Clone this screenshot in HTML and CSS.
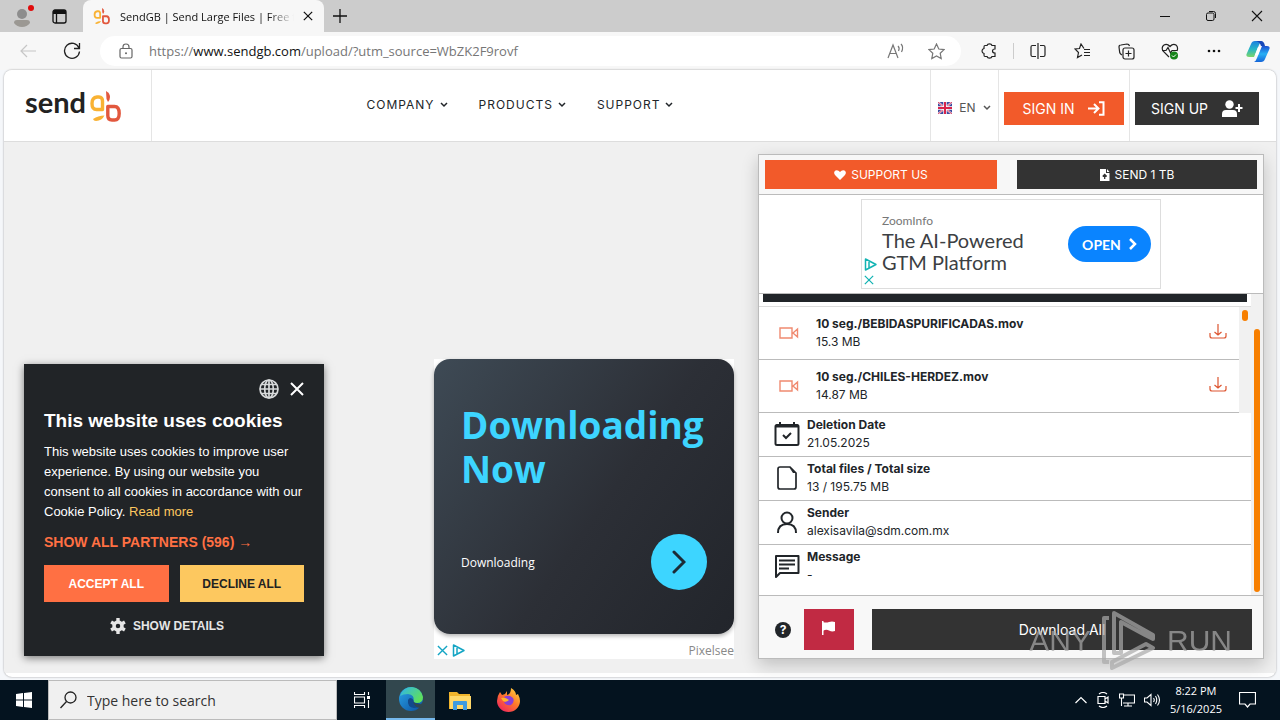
FILE: index.html
```
<!DOCTYPE html>
<html lang="en">
<head>
    <meta charset="UTF-8">
    <meta name="viewport" content="width=device-width, initial-scale=1.0">
    <title>SendGB | Send Large Files | Free</title>
    <link rel="stylesheet" href="styles.css">
</head>
<body>
    <svg class="defs" width="0" height="0" aria-hidden="true">
        <defs>
            <linearGradient id="copilotLeft" x1="0" y1="0" x2="0" y2="1">
                <stop offset="0" stop-color="#1b7fe0"/><stop offset="0.5" stop-color="#25b5c8"/><stop offset="1" stop-color="#7bd66a"/>
            </linearGradient>
            <linearGradient id="copilotRight" x1="0" y1="0" x2="0" y2="1">
                <stop offset="0" stop-color="#1a4fd0"/><stop offset="0.5" stop-color="#28b0f5"/><stop offset="1" stop-color="#1565d8"/>
            </linearGradient>
            <linearGradient id="edgeBlue" x1="0" y1="0" x2="1" y2="1">
                <stop offset="0" stop-color="#2aa5e8"/><stop offset="1" stop-color="#0c4fa0"/>
            </linearGradient>
            <linearGradient id="edgeGreen" x1="0" y1="0" x2="1" y2="0.6">
                <stop offset="0" stop-color="#2fb4ee"/><stop offset="1" stop-color="#5fe05a"/>
            </linearGradient>
            <linearGradient id="foxFire" x1="1" y1="0" x2="0.2" y2="1">
                <stop offset="0" stop-color="#ffe23f"/><stop offset="0.5" stop-color="#ff7a2a"/><stop offset="1" stop-color="#f0245e"/>
            </linearGradient>
            <symbol id="gb" viewBox="0 0 32 34">
                <g fill="none" stroke-width="3.400" stroke-linejoin="round">
                    <path stroke="#f9b233" d="M12.500 20.500H6.500Q2 20.500 2 14.500T7 8H9Q12.500 8 12.500 12Z"/>
                    <path stroke="#e2583e" d="M17.800 17.500H24.500Q29.200 17.500 29.200 24.500T24 31H22Q17.800 31 17.800 26.500Z"/>
                </g>
                <path fill="#f9b233" d="M3 30Q8 26.500 14.500 26.500Q12 31.500 6 32Q3.500 32 3 30Z"/>
                <path fill="#e2583e" d="M16 2Q20 4 20 8Q20 11 18 13L16.500 10Z"/>
            </symbol>
            <symbol id="caret" viewBox="0 0 8 6"><path d="M1 1L4 4L7 1" fill="none" stroke="currentColor" stroke-width="1.500"/></symbol>
            <symbol id="cross" viewBox="0 0 12 12"><path d="M1 1L11 11M11 1L1 11" fill="none" stroke="currentColor" stroke-width="1.500"/></symbol>
            <symbol id="adchoices" viewBox="0 0 13 13"><path d="M1.500 1V12L12 6.500ZM5 4V9.500" fill="none" stroke="currentColor" stroke-width="1.500" stroke-linejoin="round"/></symbol>
            <symbol id="video" viewBox="0 0 20 12"><path d="M1 1H13V11H1ZM14 6L18.500 2V10Z" fill="none" stroke="currentColor" stroke-width="1.400"/></symbol>
            <symbol id="download" viewBox="0 0 18 16"><path d="M9 0V11M5.500 8L9 11L12.500 8M1 9V12Q1 14 3 14H15Q17 14 17 12V9" fill="none" stroke="currentColor" stroke-width="1.200"/></symbol>
        </defs>
    </svg>

    <div class="tab-bar">
        <button class="icon-btn profile" aria-label="Profile">
            <svg width="22" height="24" viewBox="0 0 22 24"><circle cx="8" cy="10" r="5" fill="#8d8d8d"/><path d="M0 19Q0 16 3 16H13Q16 16 16 19Q13 23 8 23T0 19Z" fill="#9b9893"/><circle cx="17" cy="4" r="3" fill="#e00b0b"/></svg>
        </button>
        <button class="icon-btn tab-actions" aria-label="Tab actions">
            <svg width="15" height="15" viewBox="0 0 15 15"><rect x="1" y="1" width="13" height="13" rx="2" fill="none" stroke="#111" stroke-width="1.300"/><path d="M1 3Q1 1 3 1H12Q14 1 14 3V5H1Z" fill="#111"/><path d="M4.500 4V14" stroke="#111" stroke-width="1.300"/></svg>
        </button>
        <div class="tab">
            <svg class="favicon" width="18" height="18"><use href="#gb"/></svg>
            <span class="tab-title">SendGB | Send Large Files | Free f</span>
            <button class="icon-btn" aria-label="Close tab"><svg width="10" height="10"><use href="#cross"/></svg></button>
        </div>
        <button class="icon-btn new-tab" aria-label="New tab"><svg width="14" height="14" viewBox="0 0 14 14"><path d="M7 0V14M0 7H14" stroke="#111" stroke-width="1.300"/></svg></button>
        <div class="window-buttons">
            <button class="icon-btn" aria-label="Minimize"><svg width="10" height="12" viewBox="0 0 10 12"><path d="M0 6.500H10" stroke="#111"/></svg></button>
            <button class="icon-btn" aria-label="Restore"><svg width="12" height="12" viewBox="0 0 12 12"><rect x="1.500" y="3" width="7.500" height="7.500" rx="1.500" fill="none" stroke="#111"/><path d="M4 1.500H8.500Q10.500 1.500 10.500 3.500V8" fill="none" stroke="#111"/></svg></button>
            <button class="icon-btn" aria-label="Close window"><svg width="12" height="12" viewBox="0 0 12 12"><path d="M1 1L11 11M11 1L1 11" stroke="#111" stroke-width="1.100"/></svg></button>
        </div>
    </div>

    <div class="toolbar">
        <button class="icon-btn back" aria-label="Back"><svg width="17" height="14" viewBox="0 0 17 14"><path d="M16 7H1M7 1L1 7L7 13" fill="none" stroke="#c6c6c6" stroke-width="1.200"/></svg></button>
        <button class="icon-btn" aria-label="Reload"><svg width="18" height="18" viewBox="0 0 18 18"><path d="M16 6A7.500 7.500 0 1 0 16.500 9.500M16.500 1V6.500H11" fill="none" stroke="#222" stroke-width="1.300"/></svg></button>
        <div class="address">
            <svg width="14" height="16" viewBox="0 0 14 16"><rect x="1" y="5.500" width="12" height="9.500" rx="1.500" fill="none" stroke="#666" stroke-width="1.200"/><path d="M4 5.500V4Q4 1 7 1T10 4V5.500" fill="none" stroke="#666" stroke-width="1.200"/><circle cx="7" cy="10.300" r="1" fill="#666"/></svg>
            <span class="url">https://<b>www.sendgb.com</b>/upload/?utm_source=WbZK2F9rovf</span>
            <button class="icon-btn muted" aria-label="Read aloud"><svg width="18" height="16" viewBox="0 0 18 16"><path d="M1 15L6 2L11 15M3 10.500H9M11 3Q13 5 11.500 8M14 1Q17 4 14.500 9" fill="none" stroke="#777" stroke-width="1.200"/></svg></button>
            <button class="icon-btn muted" aria-label="Favorite"><svg width="17" height="17" viewBox="0 0 17 17"><path d="M8.500 1L10.800 6L16 6.600L12.200 10.200L13.200 15.600L8.500 13L3.800 15.600L4.800 10.200L1 6.600L6.200 6Z" fill="none" stroke="#777" stroke-width="1.200"/></svg></button>
        </div>
        <div class="tools">
            <button class="icon-btn" aria-label="Extensions"><svg width="16" height="16" viewBox="0 0 16 16"><path d="M4 2.500H6Q6.500 0.800 8.500 0.800T11 2.500H14V6Q11.500 6 11.500 8T14 10V13.500H11Q10.500 15.200 8.500 15.200T6 13.500H4Q3 13.500 3 12V10.500Q1 10 1 8T3 5.500V4Q3 2.500 4 2.500Z" fill="none" stroke="#222" stroke-width="1.200"/></svg></button>
            <span class="divider"></span>
            <button class="icon-btn" aria-label="Split screen"><svg width="16" height="16" viewBox="0 0 16 16"><path d="M6 2.500H2.500Q1 2.500 1 4V12Q1 13.500 2.500 13.500H6M10 2.500H13.500Q15 2.500 15 4V12Q15 13.500 13.500 13.500H10M8 0V16" fill="none" stroke="#222" stroke-width="1.200"/></svg></button>
            <button class="icon-btn" aria-label="Favorites list"><svg width="17" height="16" viewBox="0 0 17 16"><path d="M10 5.500L7 1L5.500 5.500L1 6L4.500 9.500L3.500 14.500L8 12M10 6.500H16M10 9.500H16M10 12.500H16" fill="none" stroke="#222" stroke-width="1.200"/></svg></button>
            <button class="icon-btn" aria-label="Collections"><svg width="17" height="17" viewBox="0 0 17 17"><path d="M4 12Q1.500 11 1.500 8L1 4Q1 2 3 2L9 1Q11 1 11.500 3" fill="none" stroke="#222" stroke-width="1.200"/><rect x="5" y="5" width="11" height="11" rx="2" fill="none" stroke="#222" stroke-width="1.200"/><path d="M10.500 7.500V13.500M7.500 10.500H13.500" stroke="#222" stroke-width="1.200"/></svg></button>
            <button class="icon-btn" aria-label="Browser essentials"><svg width="18" height="17" viewBox="0 0 18 17"><path d="M8 14L2 8Q0 4 3 2Q6 0 9 3.500Q12 0 15 2Q17.500 4 16 8M1 7.500H5L7 4.500L9.500 10L11 7.500H16" fill="none" stroke="#222" stroke-width="1.200"/><circle cx="13" cy="12.500" r="4" fill="#16851a"/><path d="M11 12.500L12.500 14L15 11.500" fill="none" stroke="#fff"/></svg></button>
            <button class="icon-btn" aria-label="More"><svg width="14" height="4" viewBox="0 0 14 4"><circle cx="2" cy="2" r="1.300" fill="#111"/><circle cx="7" cy="2" r="1.300" fill="#111"/><circle cx="12" cy="2" r="1.300" fill="#111"/></svg></button>
            <button class="icon-btn" aria-label="Copilot"><svg width="24" height="23" viewBox="0 0 24 23"><path d="M16 1H9Q6 1 5 4L1 13Q-1 17 3 17H8L13 5Q14 2 16 1Z" fill="url(#copilotLeft)"/><path d="M8 22H15Q18 22 19 19L23 10Q25 6 21 6H16L11 18Q10 21 8 22Z" fill="url(#copilotRight)"/><path d="M12 7H15L12 15H9Z" fill="#fff"/><path d="M10 1H15Q18 1 19 6H15Q14 2 10 1Z" fill="#1747b8"/></svg></button>
        </div>
    </div>

    <div class="viewport">
        <header class="site-header">
            <a class="logo" href="#"><span>send</span><svg width="32" height="34"><use href="#gb"/></svg></a>
            <nav class="main-nav">
                <a href="#">COMPANY <svg width="8" height="6"><use href="#caret"/></svg></a>
                <a href="#">PRODUCTS <svg width="8" height="6"><use href="#caret"/></svg></a>
                <a href="#">SUPPORT <svg width="8" height="6"><use href="#caret"/></svg></a>
            </nav>
            <button class="lang">
                <svg width="14" height="12" viewBox="0 0 14 12"><rect width="14" height="12" rx="1" fill="#3c4a9e"/><path d="M0 0L14 12M14 0L0 12" stroke="#f3dfe8" stroke-width="2"/><path d="M0 0L14 12M14 0L0 12" stroke="#d8234a" stroke-width="0.800"/><path d="M7 0V12M0 6H14" stroke="#fff" stroke-width="3.400"/><path d="M7 0V12M0 6H14" stroke="#d8234a" stroke-width="2"/></svg>
                EN
                <svg width="8" height="6"><use href="#caret"/></svg>
            </button>
            <div class="sign-cell sign-in-cell">
                <a class="sign-btn orange" href="#">SIGN IN
                    <svg width="17" height="15" viewBox="0 0 17 15"><path d="M0 7.500H10M6 3L10.500 7.500L6 12M11 1.200H15.500V13.800H11" fill="none" stroke="#fff" stroke-width="2"/></svg>
                </a>
            </div>
            <div class="sign-cell">
                <a class="sign-btn dark" href="#">SIGN UP
                    <svg width="21" height="17" viewBox="0 0 21 17"><circle cx="7.500" cy="4.500" r="4.200" fill="#fff"/><path d="M0 17V14Q0 10 4 10H11Q15 10 15 14V17ZM16 4V12H18V4ZM13.500 7V9H20.500V7Z" fill="#fff"/></svg>
                </a>
            </div>
        </header>

        <main class="page">
            <aside class="ad-box">
                <div class="ad-card">
                    <h2>Downloading Now</h2>
                    <div class="ad-bottom">
                        <span>Downloading</span>
                        <button class="ad-go" aria-label="Open ad"><svg width="14" height="24" viewBox="0 0 14 24"><path d="M2 2L12 12L2 22" fill="none" stroke="#1c2b36" stroke-width="3" stroke-linecap="round"/></svg></button>
                    </div>
                </div>
                <div class="ad-footer">
                    <svg width="11" height="11"><use href="#cross"/></svg>
                    <svg width="13" height="13"><use href="#adchoices"/></svg>
                    <span>Pixelsee</span>
                </div>
            </aside>

            <section class="panel">
                <div class="panel-top">
                    <a class="top-btn orange" href="#"><svg width="12" height="10" viewBox="0 0 12 10"><path d="M6 10L1 5Q-1 2 1.500 0.500Q4 -0.500 6 2Q8 -0.500 10.500 0.500Q13 2 11 5Z" fill="#fff"/></svg> SUPPORT US</a>
                    <a class="top-btn wide dark" href="#"><svg width="10" height="12" viewBox="0 0 10 12"><path d="M0 0H6V4H9.500V12H0Z" fill="#fff"/><path d="M7 0L9.500 3H7Z" fill="#fff"/><path d="M4.700 10V6M2.700 7.500L4.700 5.500L6.700 7.500" fill="none" stroke="#333" stroke-width="1.300"/></svg> SEND 1 TB</a>
                </div>
                <div class="panel-ad">
                    <div class="zoom-ad">
                        <div class="ad-marks">
                            <svg width="13" height="13"><use href="#adchoices"/></svg>
                            <svg width="10" height="10"><use href="#cross"/></svg>
                        </div>
                        <div class="zoom-text">
                            <small>ZoomInfo</small>
                            <strong>The AI-Powered GTM Platform</strong>
                        </div>
                        <button class="open-btn">OPEN <svg width="8" height="12" viewBox="0 0 8 12"><path d="M1 1L6 6L1 11" fill="none" stroke="#fff" stroke-width="2.500"/></svg></button>
                    </div>
                </div>
                <div class="panel-body">
                    <div class="panel-scroll">
                        <div class="black-bar"></div>
                        <div class="files">
                            <ul class="file-list">
                                <li>
                                    <svg class="video" width="20" height="12"><use href="#video"/></svg>
                                    <p><b>10 seg./BEBIDASPURIFICADAS.mov</b>15.3 MB</p>
                                    <button class="icon-btn download" aria-label="Download file"><svg width="18" height="16"><use href="#download"/></svg></button>
                                </li>
                                <li>
                                    <svg class="video" width="20" height="12"><use href="#video"/></svg>
                                    <p><b>10 seg./CHILES-HERDEZ.mov</b>14.87 MB</p>
                                    <button class="icon-btn download" aria-label="Download file"><svg width="18" height="16"><use href="#download"/></svg></button>
                                </li>
                            </ul>
                            <div class="track"><div class="thumb thumb-small"></div></div>
                        </div>
                        <ul class="info">
                            <li>
                                <svg width="26" height="26" viewBox="0 0 26 26"><path d="M3 4H23Q24.500 4 24.500 5.500V22.500Q24.500 24 23 24H3Q1.500 24 1.500 22.500V5.500Q1.500 4 3 4Z" fill="none" stroke="#212529" stroke-width="2"/><path d="M6 1V5M20 1V5" stroke="#212529" stroke-width="2"/><path d="M2 5H24" stroke="#212529" stroke-width="3"/><path d="M9 14L12 17L17 12" fill="none" stroke="#212529" stroke-width="2"/></svg>
                                <p><b>Deletion Date</b>21.05.2025</p>
                            </li>
                            <li>
                                <svg width="26" height="26" viewBox="0 0 26 26"><path d="M6 2H16L22 8V22Q22 24 20 24H6Q4 24 4 22V4Q4 2 6 2Z" fill="none" stroke="#212529" stroke-width="1.700"/><path d="M15 2L22 8H19Z" fill="#212529"/></svg>
                                <p><b>Total files / Total size</b>13 / 195.75 MB</p>
                            </li>
                            <li>
                                <svg width="26" height="26" viewBox="0 0 26 26"><circle cx="13" cy="9" r="5.500" fill="none" stroke="#212529" stroke-width="2"/><path d="M4 24Q4 15 13 15T22 24" fill="none" stroke="#212529" stroke-width="2"/></svg>
                                <p><b>Sender</b>alexisavila@sdm.com.mx</p>
                            </li>
                            <li>
                                <svg width="26" height="26" viewBox="0 0 26 26"><path d="M2 24V3H24.500V20H6Z" fill="none" stroke="#212529" stroke-width="2" stroke-linejoin="round"/><path d="M5 7.500H21M5 11.500H21M5 15.500H15" stroke="#212529" stroke-width="2"/></svg>
                                <p><b>Message</b>-</p>
                            </li>
                        </ul>
                    </div>
                    <div class="track track-main"><div class="thumb thumb-large"></div></div>
                </div>
                <div class="panel-footer">
                    <button class="icon-btn" aria-label="Help"><span class="help">?</span></button>
                    <button class="flag" aria-label="Report"><svg width="14" height="14" viewBox="0 0 14 14"><path d="M0 0H1.500V14H0ZM1 1Q4 2 7 1T13 1V10Q10 11 7 9.500T1 10Z" fill="#fff"/></svg></button>
                    <button class="download-all">Download All</button>
                </div>
            </section>
        </main>

        <div class="cookie">
            <div class="cookie-icons">
                <button class="icon-btn" aria-label="Language"><svg width="20" height="20" viewBox="0 0 20 20"><g fill="none" stroke="#d8dadb" stroke-width="1.700"><circle cx="10" cy="10" r="9"/><ellipse cx="10" cy="10" rx="4.300" ry="9"/><path d="M10 1V19M1 10H19M2.500 5.500H17.500M2.500 14.500H17.500"/></g></svg></button>
                <button class="icon-btn" aria-label="Close"><svg width="14" height="14" viewBox="0 0 14 14"><path d="M1 1L13 13M13 1L1 13" stroke="#fff" stroke-width="2"/></svg></button>
            </div>
            <h2>This website uses cookies</h2>
            <p>This website uses cookies to improve user experience. By using our website you consent to all cookies in accordance with our Cookie Policy. <a href="#">Read more</a></p>
            <a class="partners" href="#">SHOW ALL PARTNERS (596) →</a>
            <div class="cookie-buttons">
                <button class="accept">ACCEPT ALL</button>
                <button class="decline">DECLINE ALL</button>
            </div>
            <button class="details">
                <svg width="16" height="16" viewBox="0 0 16 16"><circle cx="8" cy="8" r="4" fill="none" stroke="#e6e6e6" stroke-width="3.500"/><path d="M8 0V3M8 13V16M1.100 4L3.700 5.500M12.300 10.500L14.900 12M1.100 12L3.700 10.500M12.300 5.500L14.900 4" stroke="#e6e6e6" stroke-width="3.400"/></svg>
                SHOW DETAILS
            </button>
        </div>
    </div>

    <footer class="taskbar">
        <button class="icon-btn start" aria-label="Start"><svg width="16" height="16" viewBox="0 0 16 16"><path d="M0 2L7 1V7.500H0ZM8 1L16 0V7.500H8ZM0 8.500H7V15L0 14ZM8 8.500H16V16L8 15Z" fill="#fff"/></svg></button>
        <label class="search">
            <svg width="17" height="18" viewBox="0 0 17 18"><circle cx="10.500" cy="6.500" r="5.500" fill="none" stroke="#222" stroke-width="1.300"/><path d="M6.500 10.500L0.500 17" stroke="#222" stroke-width="1.300"/></svg>
            <input type="text" placeholder="Type here to search" aria-label="Type here to search">
        </label>
        <button class="icon-btn task" aria-label="Task view"><svg width="16" height="16" viewBox="0 0 16 16"><path d="M0.500 0V2.500H10.500V0M0.500 16V13.500H10.500V16M0.500 5H10.500V11H0.500ZM14.500 0V3M14.500 8V16" fill="none" stroke="#fff" stroke-width="1.100"/><rect x="13" y="4" width="3" height="3" fill="#fff"/></svg></button>
        <button class="icon-btn task active" aria-label="Edge"><svg width="24" height="24" viewBox="0 0 24 24"><circle cx="12" cy="12" r="12" fill="url(#edgeBlue)"/><path d="M1 9Q4 0 13 0Q22 1 24 10Q24 16 18 16Q14 16 14.500 14Q16 8 9 7Q4 7 1 9Z" fill="url(#edgeGreen)"/><path d="M9 13Q8 20 15 21Q19 21 22 19Q21 16 18 16Q14 16 14.500 13Q11 9 9 13Z" fill="#124a8c"/><path d="M14 14Q16 18 22 17L24 15V19L21 21Q15 20 14 14Z" fill="#32474e"/></svg></button>
        <button class="icon-btn task" aria-label="File Explorer"><svg width="22" height="19" viewBox="0 0 22 19"><path d="M0 1H8L10 3H21V18H0Z" fill="#f0b42c"/><path d="M1 5H22V18H1Z" fill="#ffd869"/><path d="M4 19V11Q4 10 5 10H17Q18 10 18 11V19H14V14H8V19Z" fill="#3d9be0"/></svg></button>
        <button class="icon-btn task" aria-label="Firefox"><svg width="23" height="24" viewBox="0 0 23 24"><path d="M3 4L5 7L8 6L10 3V7Q14 6 14 0Q19 3 19 7L21 6Q23 10 23 13A11.500 11 0 0 1 0 13Q0 8 3 4Z" fill="url(#foxFire)"/><path d="M7 9Q12 6 16 10Q18 14 14 17Q9 18 7 14L11 12Z" fill="#8a3fd6"/><path d="M4 10Q8 9 12 12Q9 15 6 13Z" fill="#ffb52b"/></svg></button>
        <div class="tray">
            <svg width="12" height="8" viewBox="0 0 12 8"><path d="M0.500 7L6 1.500L11.500 7" fill="none" stroke="#fff" stroke-width="1.200"/></svg>
            <svg width="14" height="16" viewBox="0 0 14 16"><path d="M2 4.500H9V11.500H2ZM9 7L12 5V11L9 9M3 2Q7 -1 11 2M3 14Q7 17 11 14" fill="none" stroke="#fff" stroke-width="1.200"/></svg>
            <svg width="16" height="14" viewBox="0 0 16 14"><path d="M5 2H15.500V10H4M9 10V13M5 13H13M0.500 1H4.500V5H0.500ZM2.500 5V13" fill="none" stroke="#fff" stroke-width="1.100"/></svg>
            <svg width="17" height="14" viewBox="0 0 17 14"><path d="M0.500 5H3L7 1.500V12.500L3 9H0.500ZM9.500 5Q11 7 9.500 9M11.500 3Q14 7 11.500 11M13.500 1.500Q17.500 7 13.500 12.500" fill="none" stroke="#fff" stroke-width="1.100"/></svg>
            <div class="clock"><span>8:22 PM</span><span>5/16/2025</span></div>
            <svg width="17" height="16" viewBox="0 0 17 16"><path d="M0.500 0.500H16.500V12H11L8.500 15L6 12H0.500Z" fill="none" stroke="#fff" stroke-width="1.200"/></svg>
        </div>
    </footer>

    <div class="watermark" aria-hidden="true">
        <span>ANY</span>
        <svg width="56" height="62" viewBox="0 0 56 62"><g fill="none" stroke="currentColor" stroke-width="4" stroke-linejoin="round"><path d="M8 8H3V52H8"/><path d="M13 43V3L52 25V29L44 25L20 12V43Z"/><path d="M11 58V52L45 34L52 38Z"/></g></svg>
        <span>RUN</span>
    </div>
</body>
</html>
```
FILE: styles.css
```
* {
    box-sizing: border-box;
}

body {
    margin: 0;
    height: 100vh;
    display: flex;
    flex-direction: column;
    overflow: hidden;
    background-color: #f5f7fa;
    color: #212529;
    font-family: Inter, sans-serif;
    font-size: 12px;
}

h2,
p,
ul {
    margin: 0;
    padding: 0;
    list-style: none;
}

a {
    color: inherit;
    text-decoration: none;
}

button {
    border: none;
    padding: 0;
    background: none;
    color: inherit;
    font-family: inherit;
    font-size: inherit;
    cursor: pointer;
}

.defs {
    position: absolute;
}

.icon-btn,
.tray,
.tools {
    display: flex;
    align-items: center;
    justify-content: center;
}

/* browser chrome */
.tab-bar {
    flex: 0 0 32px;
    display: flex;
    align-items: center;
    background-color: #cccccc;
    color: #111;
    font-family: "Open Sans", sans-serif;
}

.profile {
    margin-left: 14px;
}

.tab-actions {
    width: 47px;
}

.tab {
    align-self: stretch;
    width: 241px;
    display: flex;
    align-items: center;
    gap: 9px;
    padding: 0 11px 0 10px;
    background-color: #f7f7f7;
    border-radius: 8px 8px 0 0;
}

.tab-title {
    flex: 1;
    overflow: hidden;
    white-space: nowrap;
    font-size: 11px;
    -webkit-mask-image: linear-gradient(to right, #000 85%, transparent);
    mask-image: linear-gradient(to right, #000 85%, transparent);
}

.new-tab {
    width: 32px;
}

.window-buttons {
    margin-left: auto;
    display: flex;
}

.window-buttons .icon-btn {
    width: 46px;
    height: 32px;
}

.toolbar {
    flex: 0 0 38px;
    display: flex;
    align-items: center;
    padding: 0 8px 0 19px;
    background-color: #f7f7f7;
}

.toolbar > .icon-btn {
    width: 18px;
    margin-right: 26px;
}

.toolbar > .icon-btn + .icon-btn {
    margin-right: 19px;
}

.address {
    flex: 1;
    height: 30px;
    display: flex;
    align-items: center;
    gap: 16px;
    padding: 0 13px 0 19px;
    background-color: #fff;
    border-radius: 15px;
}

.url {
    flex: 1;
    color: #767676;
    font-family: "Open Sans", sans-serif;
    font-size: 13px;
}

.url b {
    color: #111;
    font-weight: 400;
}

.muted {
    width: 24px;
}

.tools {
    margin-left: 14px;
}

.tools .icon-btn {
    width: 28px;
}

.tools .icon-btn + .icon-btn {
    margin-left: 16px;
}

.divider {
    height: 16px;
    margin: 0 10px;
    border-left: 1px solid #ccc;
}

/* site header */
.viewport {
    flex: 1;
    min-height: 0;
    position: relative;
    display: flex;
    flex-direction: column;
    margin: 0 4px 3px;
    padding-bottom: 4px;
    overflow: hidden;
    background-color: #fff;
    border-radius: 8px;
    box-shadow: 0 0 2px rgba(0, 0, 0, 0.4);
}

.site-header {
    flex: 0 0 72px;
    display: flex;
    align-items: stretch;
    background-color: #fff;
    border-bottom: 1px solid #ddd;
    box-shadow: 0 1px 4px rgba(0, 0, 0, 0.1);
}

.logo {
    width: 148px;
    display: flex;
    align-items: center;
    gap: 4px;
    padding-left: 21px;
    border-right: 1px solid #e5e5e5;
    color: #222;
    font-family: Lato, sans-serif;
    font-size: 29px;
    font-weight: 700;
}

.logo span {
    padding-bottom: 8px;
}

.main-nav {
    flex: 1;
    display: flex;
    align-items: center;
    justify-content: center;
    gap: 31px;
    padding: 0 42px 2px 0;
    letter-spacing: 1px;
}

.main-nav a {
    display: flex;
    align-items: center;
    gap: 5px;
}

.lang {
    width: 68px;
    display: flex;
    align-items: center;
    justify-content: center;
    gap: 7px;
    padding-top: 4px;
    border-left: 1px solid #e5e5e5;
    color: #555;
}

.sign-cell {
    display: flex;
    align-items: center;
    padding: 6px 17px 0 5px;
}

.sign-in-cell {
    padding-right: 5px;
    border-left: 1px solid #e5e5e5;
    border-right: 1px solid #e5e5e5;
}

.sign-btn {
    min-width: 120px;
    height: 33px;
    display: flex;
    align-items: center;
    justify-content: center;
    gap: 14px;
    padding: 0 16px;
    color: #fff;
    font-size: 14px;
}

.orange {
    background-color: #f25a2a;
}

.dark {
    background-color: #333;
}

/* page */
.page {
    flex: 1;
    min-height: 0;
    display: flex;
    justify-content: flex-end;
    align-items: flex-end;
    gap: 24px;
    padding: 12px 12px 14px;
    background-color: #f0f0f0;
}

.ad-box {
    width: 300px;
    background-color: #fff;
    font-family: "Open Sans", sans-serif;
}

.ad-card {
    display: flex;
    flex-direction: column;
    justify-content: space-between;
    height: 275px;
    padding: 44px 27px;
    background: linear-gradient(125deg, #3e4a55, #2c2f36 55%, #22252b);
    border-radius: 16px;
    box-shadow: 0 2px 4px rgba(0, 0, 0, 0.3);
    color: #fff;
}

.ad-card h2 {
    color: #3dd5ff;
    font-size: 37px;
    line-height: 44px;
}

.ad-bottom {
    display: flex;
    align-items: center;
    justify-content: space-between;
}

.ad-go {
    width: 56px;
    height: 56px;
    display: flex;
    align-items: center;
    justify-content: center;
    background-color: #3dd5ff;
    border-radius: 50%;
}

.ad-footer {
    display: flex;
    align-items: center;
    gap: 4px;
    height: 25px;
    padding: 8px 0 0 3px;
    color: #14a5c4;
}

.ad-footer span {
    margin-left: auto;
    color: #888;
}

.panel {
    align-self: stretch;
    width: 506px;
    display: flex;
    flex-direction: column;
    background-color: #fff;
    border: 1px solid #bbb;
    box-shadow: 0 6px 16px rgba(0, 0, 0, 0.2);
}

.panel-top {
    display: flex;
    gap: 20px;
    padding: 5px 6px;
    background-color: #f7f7f7;
    border-bottom: 1px solid #bbb;
}

.top-btn {
    flex: 29;
    height: 29px;
    display: flex;
    align-items: center;
    justify-content: center;
    gap: 5px;
    color: #fff;
}

.wide {
    flex: 30;
}

.panel-ad {
    display: flex;
    justify-content: center;
    padding: 4px;
    border-bottom: 1px solid #bbb;
}

.zoom-ad {
    width: 300px;
    height: 90px;
    display: flex;
    align-items: center;
    border: 1px solid #ddd;
    padding-right: 9px;
    font-family: Lato, sans-serif;
}

.ad-marks {
    align-self: flex-end;
    width: 20px;
    display: flex;
    flex-direction: column;
    gap: 4px;
    padding: 0 0 3px 2px;
    color: #12b3b3;
}

.zoom-text {
    flex: 1;
    padding-bottom: 3px;
}

.zoom-text small {
    display: block;
    color: #777;
    font-size: 12px;
    line-height: 16px;
}

.zoom-text strong {
    display: block;
    width: 160px;
    color: #3c4043;
    font-size: 20px;
    font-weight: 400;
    line-height: 22px;
}

.open-btn {
    width: 83px;
    height: 36px;
    display: flex;
    align-items: center;
    justify-content: center;
    gap: 8px;
    background-color: #0a84ff;
    border-radius: 18px;
    color: #fff;
    font-size: 14px;
    font-weight: 700;
}

.panel-body {
    flex: 1;
    min-height: 0;
    display: flex;
}

.panel-scroll {
    flex: 1;
}

.black-bar {
    height: 8px;
    margin: 0 4px;
    background-color: #212529;
}

.files {
    display: flex;
    margin-top: 4px;
    border-top: 1px solid #ddd;
}

.file-list {
    flex: 1;
}

.file-list li {
    height: 53px;
    display: flex;
    align-items: center;
    padding: 0 12px 0 20px;
    border-bottom: 1px solid #bbb;
}

.file-list p,
.info p {
    flex: 1;
    line-height: 18px;
}

.file-list b,
.info b {
    display: block;
    font-weight: 700;
}

.video {
    margin-right: 17px;
    color: #f08a70;
}

.download {
    padding-bottom: 2px;
    color: #dd5530;
}

.track {
    width: 12px;
    display: flex;
    flex-direction: column;
    align-items: center;
    padding-top: 3px;
    background-color: #f1f1f1;
}

.track-main {
    justify-content: flex-end;
    padding-bottom: 3px;
}

.thumb {
    width: 6px;
    border-radius: 3px;
    background-color: #f77f00;
}

.thumb-small {
    height: 11px;
}

.thumb-large {
    height: 89%;
}

.info li {
    display: flex;
    align-items: center;
    gap: 7px;
    padding: 3px 15px 4px;
    border-bottom: 1px solid #bbb;
}

.info li:last-child {
    border-bottom: none;
}

.panel-footer {
    display: flex;
    align-items: center;
    padding: 13px 11px 8px 16px;
    background-color: #f8f8f8;
    border-top: 1px solid #bbb;
}

.help {
    width: 16px;
    height: 16px;
    border-radius: 50%;
    background-color: #212529;
    color: #fff;
    font-weight: 700;
    line-height: 16px;
}

.flag {
    width: 50px;
    height: 41px;
    margin: 0 18px 0 13px;
    background-color: #c12a43;
}

.download-all {
    flex: 1;
    height: 41px;
    background-color: #333;
    color: #fff;
    font-size: 14px;
}

/* cookie notice, floats above the page */
.cookie {
    position: absolute;
    left: 20px;
    bottom: 21px;
    width: 300px;
    padding: 15px 20px 22px;
    background-color: #212427;
    color: #fff;
    box-shadow: 0 2px 8px rgba(0, 0, 0, 0.5);
    font-family: "Liberation Sans", Arial, sans-serif;
}

.cookie-icons {
    display: flex;
    justify-content: flex-end;
    gap: 11px;
    height: 20px;
}

.cookie h2 {
    margin: 9px 0 8px;
    font-size: 19px;
    line-height: 26px;
}

.cookie p {
    font-size: 13px;
    line-height: 20px;
}

.cookie p a {
    color: #fdc85f;
}

.partners {
    display: block;
    margin: 9px 0 12px;
    color: #ff7043;
    font-size: 14px;
    font-weight: 700;
    line-height: 22px;
}

.cookie-buttons {
    display: flex;
    align-items: center;
    gap: 11px;
}

.cookie-buttons button {
    flex: 1;
    height: 37px;
    font-weight: 700;
}

.accept {
    background-color: #ff7043;
}

.cookie-buttons .decline {
    background-color: #fdc85f;
    color: #222;
}

.details {
    width: 100%;
    display: flex;
    align-items: center;
    justify-content: center;
    gap: 7px;
    margin-top: 16px;
    padding-right: 14px;
    color: #e6e6e6;
    font-size: 12px;
    font-weight: 700;
}

/* taskbar */
.taskbar {
    flex: 0 0 40px;
    display: flex;
    background-color: #04131f;
    color: #fff;
    font-family: "Open Sans", sans-serif;
}

.start {
    width: 48px;
}

.task {
    width: 49px;
}

.active {
    background-color: #32474e;
    border-bottom: 2px solid #76b9ed;
}

.search {
    width: 289px;
    display: flex;
    align-items: center;
    gap: 8px;
    padding-left: 11px;
    background-color: #f0f0f0;
    border: 1px solid #bbb;
}

.search input {
    flex: 1;
    min-width: 0;
    border: none;
    outline: none;
    background: none;
    font-family: inherit;
    font-size: 14px;
}

.search input::placeholder {
    color: #333;
}

.tray {
    gap: 9px;
    margin-left: auto;
    padding-right: 24px;
}

.clock {
    display: flex;
    flex-direction: column;
    align-items: center;
    margin-right: 8px;
    font-size: 11px;
    line-height: 18px;
}

/* recording watermark */
.watermark {
    position: absolute;
    right: 48px;
    bottom: 48px;
    display: flex;
    align-items: center;
    gap: 10px;
    color: #aaa;
    opacity: 0.7;
    font-family: "Liberation Sans", sans-serif;
    font-size: 30px;
    pointer-events: none;
}
```
